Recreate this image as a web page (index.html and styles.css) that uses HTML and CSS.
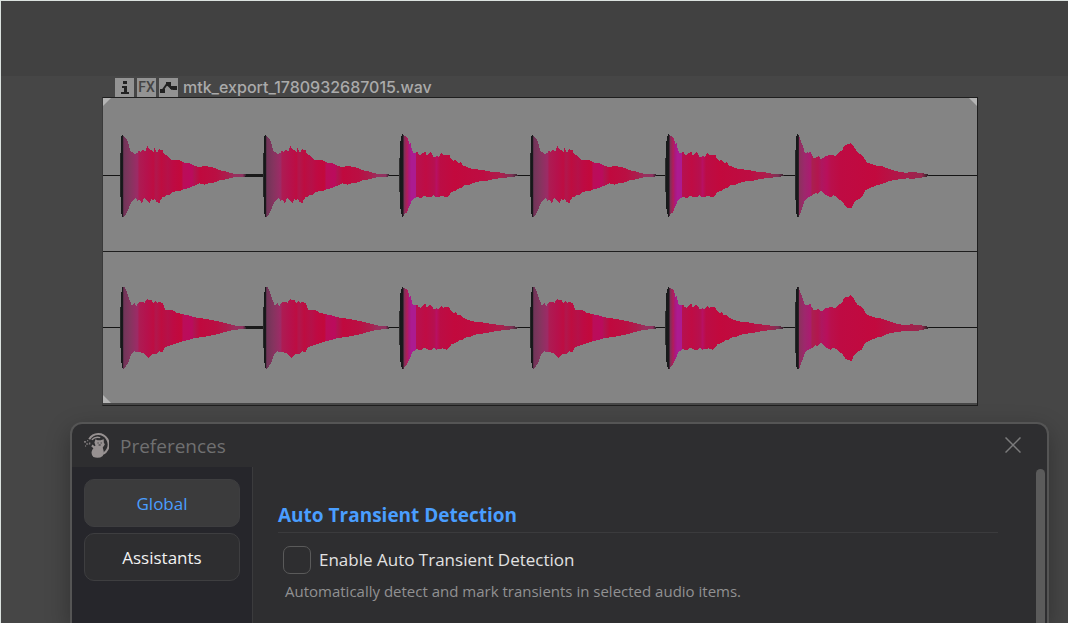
FILE: index.html
```
<!DOCTYPE html>
<html lang="en">
<head>
    <meta charset="UTF-8">
    <meta name="viewport" content="width=device-width, initial-scale=1">
    <title>Preferences</title>
    <link rel="stylesheet" href="styles.css">
</head>
<body>
    <div class="ruler"></div>

    <section class="arrange">
        <div class="item-header">
            <button class="item-button" aria-label="Item info">
                <svg viewBox="0 0 19 19"><path d="M8 3h4v3H8zM7 8h5v6h2v2H6v-2h3v-4H7z" fill="#222"/></svg>
            </button>
            <button class="item-button fx">FX</button>
            <button class="item-button" aria-label="Envelopes">
                <svg viewBox="0 0 19 19">
                    <path d="M3 13L8 6l5 5 4-1" fill="none" stroke="#222" stroke-width="2"/>
                    <path d="M1 11h5v4H1zM7 4h5v4H7zM11 8h3v3h-3zM14 8h4v4h-4z" fill="#222"/>
                </svg>
            </button>
            <span class="item-name">mtk_export_1780932687015.wav</span>
        </div>

        <div class="item">
            <svg class="lane" viewBox="0 0 2622 459" preserveAspectRatio="none">
                <defs>
                    <linearGradient id="toneA" gradientUnits="userSpaceOnUse" x1="0" y1="0" x2="400" y2="0">
                        <stop offset="0" stop-color="#333"/>
                        <stop offset=".01" stop-color="#151819"/>
                        <stop offset=".02" stop-color="#1a1a1c"/>
                        <stop offset=".028" stop-color="#703558"/>
                        <stop offset=".08" stop-color="#86345f"/>
                        <stop offset=".13" stop-color="#9d2b66"/>
                        <stop offset=".145" stop-color="#ad1c53"/>
                        <stop offset=".2" stop-color="#b5124d"/>
                        <stop offset=".25" stop-color="#bd0d42"/>
                        <stop offset=".27" stop-color="#b1174d"/>
                        <stop offset=".31" stop-color="#bd0d40"/>
                        <stop offset=".36" stop-color="#b51149"/>
                        <stop offset=".4" stop-color="#be0a43"/>
                        <stop offset=".46" stop-color="#c2093b"/>
                        <stop offset=".475" stop-color="#bb0d59"/>
                        <stop offset=".54" stop-color="#bb0b5d"/>
                        <stop offset=".56" stop-color="#b11450"/>
                        <stop offset=".6" stop-color="#c0093e"/>
                        <stop offset=".72" stop-color="#ba0f43"/>
                        <stop offset=".8" stop-color="#ac1d4d"/>
                        <stop offset=".86" stop-color="#99305e"/>
                        <stop offset=".92" stop-color="#8e3361"/>
                        <stop offset=".95" stop-color="#222"/>
                    </linearGradient>
                    <linearGradient id="toneB" gradientUnits="userSpaceOnUse" x1="0" y1="0" x2="360" y2="0">
                        <stop offset="0" stop-color="#333"/>
                        <stop offset=".01" stop-color="#151819"/>
                        <stop offset=".03" stop-color="#1a1a1c"/>
                        <stop offset=".04" stop-color="#7c3158"/>
                        <stop offset=".065" stop-color="#b31c59"/>
                        <stop offset=".08" stop-color="#aa187d"/>
                        <stop offset=".1" stop-color="#ac1b91"/>
                        <stop offset=".138" stop-color="#ac1b91"/>
                        <stop offset=".142" stop-color="#b61150"/>
                        <stop offset=".22" stop-color="#bf0c44"/>
                        <stop offset=".29" stop-color="#b6104f"/>
                        <stop offset=".31" stop-color="#b81062"/>
                        <stop offset=".34" stop-color="#bb0d45"/>
                        <stop offset=".46" stop-color="#c2093d"/>
                        <stop offset=".7" stop-color="#bd0d42"/>
                        <stop offset=".85" stop-color="#ac1f4d"/>
                        <stop offset=".94" stop-color="#7c3255"/>
                        <stop offset="1" stop-color="#222"/>
                    </linearGradient>
                    <linearGradient id="toneC" gradientUnits="userSpaceOnUse" x1="0" y1="0" x2="400" y2="0">
                        <stop offset="0" stop-color="#333"/>
                        <stop offset=".01" stop-color="#151819"/>
                        <stop offset=".025" stop-color="#1a1a1c"/>
                        <stop offset=".033" stop-color="#8c315e"/>
                        <stop offset=".07" stop-color="#9d286c"/>
                        <stop offset=".115" stop-color="#ab1c70"/>
                        <stop offset=".13" stop-color="#aa204f"/>
                        <stop offset=".17" stop-color="#b3164f"/>
                        <stop offset=".2" stop-color="#ae175f"/>
                        <stop offset=".24" stop-color="#b9105b"/>
                        <stop offset=".27" stop-color="#b9104c"/>
                        <stop offset=".34" stop-color="#be0b43"/>
                        <stop offset=".6" stop-color="#c2093e"/>
                        <stop offset=".8" stop-color="#ae194b"/>
                        <stop offset=".95" stop-color="#96294e"/>
                        <stop offset="1" stop-color="#222"/>
                    </linearGradient>
                    <polygon id="hitA" fill="url(#toneA)" points="0,-20 2,-80 5,-124 9,-120 15,-114 21,-106 25,-96 30,-74 36,-70 45,-62 48,-68 51,-64 57,-74 63,-70 66,-77 75,-72 78,-76 82,-88 87,-80 94,-76 100,-69 103,-82 109,-70 114,-70 117,-83 122,-74 127,-76 133,-63 140,-61 147,-55 155,-46 178,-46 190,-39 210,-36 225,-28 237,-24 255,-29 265,-26 285,-22 300,-15 320,-11 340,-5 372,-5 378,-2 378,3 372,5 340,6 320,12 300,14 285,21 265,24 255,28 237,24 225,30 210,37 190,42 178,48 165,48 155,52 147,60 140,58 133,64 127,66 122,74 118,84 110,80 105,70 101,74 94,72 88,84 82,76 72,66 66,84 58,74 52,76 48,66 40,74 32,84 26,100 20,112 13,124 5,124 2,80 0,20"/>
                    <polygon id="hitA2" fill="url(#toneA)" points="0,-20 3,-100 8,-124 13,-122 22,-104 28,-84 36,-66 42,-74 50,-66 56,-76 66,-78 74,-74 82,-88 86,-82 94,-85 100,-72 106,-80 112,-73 118,-78 128,-74 135,-54 155,-54 170,-45 190,-40 205,-37 225,-31 260,-26 290,-20 320,-13 340,-7 360,-5 378,-3 378,3 340,7 320,12 290,20 250,28 225,31 200,38 175,45 155,52 136,58 126,74 118,70 110,80 98,78 86,92 74,78 62,74 50,74 42,70 32,84 24,106 15,120 8,124 3,100 0,20"/>
                    <polygon id="hitB" fill="url(#toneB)" points="0,-40 3,-100 8,-124 13,-120 20,-116 26,-112 30,-92 34,-96 38,-74 44,-66 50,-68 54,-70 58,-62 64,-60 70,-66 78,-72 82,-60 93,-70 98,-64 104,-54 112,-58 118,-56 126,-66 132,-60 142,-62 150,-61 154,-52 162,-44 170,-46 176,-37 185,-39 190,-30 200,-26 220,-19 240,-17 260,-14 280,-10 300,-9 320,-5 345,-4 355,-2 357,2 345,4 320,7 300,9 280,12 260,17 240,18 225,22 210,28 196,30 188,38 180,38 168,46 156,50 150,60 142,66 130,62 112,66 103,60 97,66 86,66 74,60 66,68 58,66 52,64 44,70 38,74 34,86 28,98 22,112 16,116 12,124 8,124 3,100 0,40"/>
                    <polygon id="hitC" fill="url(#toneC)" points="0,-40 3,-110 6,-124 11,-122 16,-106 22,-92 30,-66 36,-69 42,-68 46,-72 50,-62 56,-52 62,-52 70,-58 78,-48 84,-52 92,-58 110,-62 122,-58 128,-64 136,-72 142,-76 146,-86 152,-92 160,-93 166,-97 172,-93 178,-84 186,-70 196,-64 206,-54 216,-38 230,-34 245,-29 262,-27 280,-20 300,-13 320,-9 336,-8 350,-10 370,-8 385,-6 396,-4 402,-1 402,2 385,6 370,9 350,10 336,9 320,11 300,14 280,18 262,26 245,30 230,36 212,44 200,66 186,74 176,84 170,99 160,98 150,92 142,78 132,72 124,64 116,60 106,66 94,60 86,54 78,44 68,56 62,52 50,62 40,66 30,74 24,92 18,108 12,124 6,124 3,110 0,40"/>
                </defs>
                <path class="zero" d="M0 232H2622"/>
                <path class="noise" d="M425 232H482"/>
                <use href="#hitA" x="51" y="232"/>
                <use href="#hitA" x="480" y="232"/>
                <use href="#hitB" x="889" y="232"/>
                <use href="#hitA" x="1281" y="232"/>
                <use href="#hitB" x="1687" y="232"/>
                <use href="#hitC" x="2076" y="232"/>
            </svg>
            <svg class="lane" viewBox="0 0 2622 453" preserveAspectRatio="none">
                <path class="zero" d="M0 227H2622"/>
                <path class="noise" d="M425 227H482"/>
                <use href="#hitA2" x="51" y="227"/>
                <use href="#hitA2" x="480" y="227"/>
                <use href="#hitB" x="889" y="227"/>
                <use href="#hitA2" x="1281" y="227"/>
                <use href="#hitB" x="1687" y="227"/>
                <use href="#hitC" x="2076" y="227"/>
            </svg>
            <span class="handle top-left"></span>
            <span class="handle top-right"></span>
            <span class="handle bottom-left"></span>
        </div>
    </section>

    <main class="dialog">
        <header class="title-bar">
            <svg class="logo" viewBox="0 0 24 24">
                <path d="M5 6A10 10 0 1 1 14 21" fill="none" stroke="#979191" stroke-width="2"/>
                <path d="M7 6q4-4 9-2l-1 1q-4-1-7 2z" fill="#979191"/>
                <path d="M11 6l2 1h3l3-1v3l1 2-2 3 1 4-1 4q-4 3-9 1-3-3-1-7l3-4-1-3z" fill="#979191"/>
                <path d="M8 11l4 3-1 2-4-3z" fill="#979191"/>
                <path d="M13 9h1v1h-1zM16 9h1v1h-1zM14 11h2v1h-2z" fill="#2e2e30"/>
                <path d="M0 8h2v1H0zM3 7h1v1H3zM2 10h2v1H2zM5 9h1v2H5zM1 12h1v1H1z" fill="#979191"/>
            </svg>
            <h1>Preferences</h1>
            <button class="close" aria-label="Close">
                <svg viewBox="0 0 16 16"><path d="M0.500 0.500l15 15M15.500 0.500l-15 15" fill="none" stroke="#7b7b7c" stroke-width="1.500"/></svg>
            </button>
        </header>
        <div class="dialog-body">
            <nav class="sidebar">
                <button class="tab active">Global</button>
                <button class="tab">Assistants</button>
            </nav>
            <section class="settings">
                <h2>Auto Transient Detection</h2>
                <label class="option">
                    <input type="checkbox" aria-describedby="transient-hint">
                    Enable Auto Transient Detection
                </label>
                <p class="hint" id="transient-hint">Automatically detect and mark transients in selected audio items.</p>
            </section>
            <div class="scrollbar"></div>
        </div>
    </main>
</body>
</html>
```
FILE: styles.css
```
* {
    margin: 0;
    padding: 0;
    box-sizing: border-box;
}

body {
    display: flex;
    flex-direction: column;
    height: 100vh;
    overflow: hidden;
    border-top: 1px solid #dbe2df;
    border-left: 1px solid #dbe2df;
    background-color: #464646;
    color: #e2e2e2;
    font-family: "Segoe UI", "Open Sans", "Noto Sans", sans-serif;
}

button {
    border: none;
    font-family: inherit;
    cursor: pointer;
}

.ruler {
    flex: none;
    height: 75px;
    background-color: #414141;
}

/* Media item */
.arrange {
    flex: none;
    padding: 2px 90px 16px 101px;
}

.item-header {
    display: flex;
    align-items: center;
    gap: 3px;
    height: 19px;
    padding-left: 13px;
}

.item-button {
    width: 19px;
    height: 19px;
    background-color: #939393;
    color: #444;
}

.item-button svg {
    display: block;
}

.item-button.fx {
    font-family: "Roboto", sans-serif;
    font-size: 14px;
    font-weight: 500;
    line-height: 19px;
}

.item-name {
    margin-left: 2px;
    color: #aaa;
    font-family: "Inter", sans-serif;
    font-size: 16px;
    font-weight: 500;
    line-height: 19px;
}

.item {
    position: relative;
    border: 1px solid #1e1e1e;
    border-left-color: #3a3a3a;
    background-color: #848484;
}

.lane {
    display: block;
    width: 100%;
    height: 153px;
    shape-rendering: crispEdges;
}

.lane + .lane {
    height: 154px;
    border-top: 1px solid #1e1e1e;
    border-bottom: 2px solid #464646;
}

.zero {
    stroke: #141414;
    stroke-width: 3;
}

.noise {
    stroke: #1a1a1a;
    stroke-width: 8;
}

.handle {
    position: absolute;
    width: 8px;
    height: 8px;
    background-color: #b4b4b4;
}

.top-left {
    top: 0;
    left: 0;
    clip-path: polygon(0 0, 100% 0, 0 100%);
}

.top-right {
    top: 0;
    right: 0;
    clip-path: polygon(0 0, 100% 0, 100% 100%);
}

.bottom-left {
    bottom: 2px;
    left: 0;
    clip-path: polygon(0 0, 100% 100%, 0 100%);
}

/* Preferences dialog */
.dialog {
    display: flex;
    flex: 1;
    flex-direction: column;
    margin: 0 19px 0 69px;
    border: 2px solid #555;
    border-bottom: none;
    border-radius: 12px 12px 0 0;
    background-color: #2e2e30;
    box-shadow: 0 8px 24px rgba(0, 0, 0, 0.3);
    overflow: hidden;
}

.title-bar {
    display: flex;
    align-items: center;
    height: 43px;
    padding: 0 26px 0 12px;
}

.logo {
    width: 25px;
    height: 25px;
}

h1 {
    flex: 1;
    margin-left: 11px;
    color: #707071;
    font-size: 19px;
    font-weight: 400;
}

.close {
    padding-bottom: 2px;
    background: none;
}

.close svg {
    display: block;
    width: 16px;
    height: 16px;
}

.dialog-body {
    display: flex;
    flex: 1;
}

.sidebar {
    display: flex;
    flex-direction: column;
    gap: 6px;
    width: 181px;
    padding: 12px;
    border-right: 1px solid #3b3b3d;
    background-color: #26262b;
}

.tab {
    height: 48px;
    border: 1px solid #3e3e40;
    border-radius: 10px;
    background-color: #2e2e30;
    color: #f2f2f2;
    font-size: 17px;
}

.tab.active {
    background-color: #3b3b3c;
    color: #4a9eff;
}

.settings {
    flex: 1;
    padding: 32px 38px 0 25px;
}

h2 {
    border-bottom: 1px solid #3b3b3d;
    color: #4a9eff;
    font-size: 19px;
    font-weight: 700;
    line-height: 33px;
}

.option {
    display: flex;
    align-items: center;
    gap: 8px;
    margin: 13px 0 0 5px;
    font-size: 17px;
    line-height: 28px;
}

.option input {
    width: 28px;
    height: 28px;
    border: 1px solid #5a5a5a;
    border-radius: 7px;
    appearance: none;
}

.hint {
    margin: 5px 0 0 7px;
    color: #919192;
    font-size: 15px;
    line-height: 24px;
}

.scrollbar {
    width: 9px;
    margin: 2px 2px 0 0;
    border-radius: 5px 5px 0 0;
    background-color: #5b5b5b;
}
```
